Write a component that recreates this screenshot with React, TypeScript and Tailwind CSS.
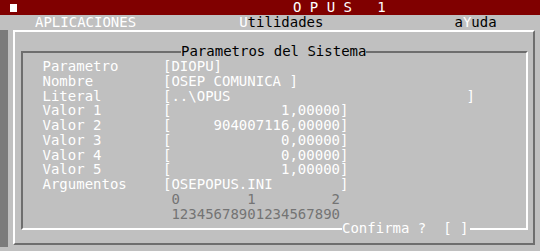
const rows: { label: string; value: string; dim?: boolean }[] = [
  { label: "Parametro", value: "[DIOPU]" },
  { label: "Nombre", value: "[OSEP COMUNICA ]" },
  { label: "Literal", value: "[..\\OPUS" + " ".repeat(28) + "]" },
  { label: "Valor 1", value: "[" + "1,00000".padStart(20) + "]" },
  { label: "Valor 2", value: "[" + "904007116,00000".padStart(20) + "]" },
  { label: "Valor 3", value: "[" + "0,00000".padStart(20) + "]" },
  { label: "Valor 4", value: "[" + "0,00000".padStart(20) + "]" },
  { label: "Valor 5", value: "[" + "1,00000".padStart(20) + "]" },
  { label: "Argumentos", value: "[" + "OSEPOPUS.INI".padEnd(20) + "]" },
  { label: "", value: " 0        1         2", dim: true },
  { label: "", value: " 12345678901234567890", dim: true },
];

const App = () => {
  return (
    <div
      className="w-[540px] h-[251px] bg-[#c0c0c0] flex flex-col overflow-hidden text-[14px] leading-[14.75px] whitespace-pre"
      style={{ fontFamily: '"DejaVu Sans Mono", "Liberation Mono", monospace' }}
    >
      {/* barra de titulo */}
      <div className="h-[15px] bg-[#800000] flex items-center">
        <div className="ml-[10px] w-[7px] h-[8px] bg-white" />
        <span className="ml-[276px] text-white">O P U S   1</span>
      </div>

      {/* menu */}
      <div className="h-[15px] flex items-center">
        <span className="ml-[35px] text-white">APLICACIONES</span>
        <span className="ml-[103px] text-black">
          <span className="text-white">U</span>tilidades
        </span>
        <span className="ml-[131px] text-black">
          a<span className="text-white">Y</span>uda
        </span>
      </div>

      <div className="flex flex-1">
        <div className="w-[8px] mb-[4px] bg-[#7b7b7b]" />

        <div className="ml-[5px] w-[522px] h-[215px] border-2 border-t-white border-l-white border-r-[#6e6e6e] border-b-[#6e6e6e]">
          <div className="relative ml-[6px] mt-[19px] w-[507px] h-[179px] border-2 border-t-[#6e6e6e] border-l-[#6e6e6e] border-r-white border-b-white pt-[6px]">
            <span className="absolute top-[-9px] left-[158px] bg-[#c0c0c0] text-black">
              Parametros del Sistema
            </span>

            {rows.map((r, i) => (
              <div key={i} className="flex h-[14.75px]">
                <span className="w-[140px] pl-[19.5px] text-white">{r.label}</span>
                <span className={r.dim ? "text-[#747474]" : "text-white"}>{r.value}</span>
              </div>
            ))}

            <span className="absolute top-[168px] left-[319px] bg-[#c0c0c0] text-white pr-[2px]">
              Confirma ?  [ ]
            </span>
          </div>
        </div>
      </div>
    </div>
  );
};

export default App;
